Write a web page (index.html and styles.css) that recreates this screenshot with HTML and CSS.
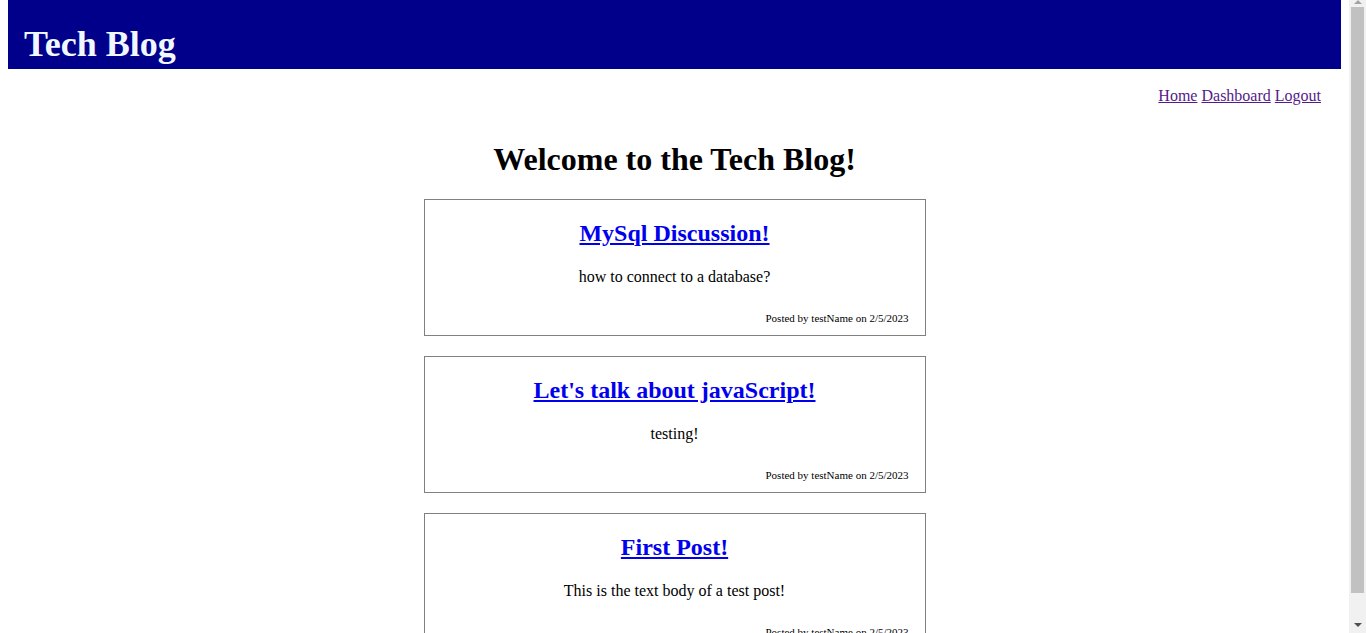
FILE: index.html
```html
<!DOCTYPE html>
<html lang="en">
<head>
<meta charset="utf-8">
<title>Tech Blog</title>
<link rel="stylesheet" href="styles.css">
</head>
<body>
<header class="site-header">
  <h1 class="site-title">Tech Blog</h1>
</header>
<nav class="site-nav">
  <a href="#home" class="nav-link">Home</a>
  <a href="#dashboard" class="nav-link">Dashboard</a>
  <a href="#logout" class="nav-link">Logout</a>
</nav>
<main class="content">
  <h1 class="page-title">Welcome to the Tech Blog!</h1>
  <section class="post">
    <h2 class="post-title"><a href="#post1">MySql Discussion!</a></h2>
    <p class="post-body">how to connect to a database?</p>
    <p class="post-meta">Posted by testName on 2/5/2023</p>
  </section>
  <section class="post">
    <h2 class="post-title"><a href="#post2">Let's talk about javaScript!</a></h2>
    <p class="post-body">testing!</p>
    <p class="post-meta">Posted by testName on 2/5/2023</p>
  </section>
  <section class="post">
    <h2 class="post-title"><a href="#post3">First Post!</a></h2>
    <p class="post-body">This is the text body of a test post!</p>
    <p class="post-meta">Posted by testName on 2/5/2023</p>
  </section>
</main>
<div class="scrollbar" aria-hidden="true">
  <span class="scroll-arrow scroll-up"></span>
  <span class="scroll-thumb"></span>
  <span class="scroll-arrow scroll-down"></span>
</div>
</body>
</html>
```

FILE: styles.css
```css
body {
  margin: 0 25px 8px 8px;
  font-family: "Liberation Serif", "Times New Roman", serif;
  font-size: 16px;
  color: #000;
  background: #fff;
}
.site-header {
  background: #00008b;
  height: 69px;
  padding: 24px 16px 0;
  box-sizing: border-box;
}
.site-title {
  margin: 0;
  font-size: 36px;
  font-weight: bold;
  color: #f0f8ff;
  line-height: 40px;
}
.site-nav {
  display: flex;
  justify-content: flex-end;
  gap: 4px;
  margin-top: 18px;
  padding-right: 20px;
}
.nav-link {
  color: #551a8b;
}
.content {
  display: flex;
  flex-direction: column;
  align-items: center;
}
.page-title {
  margin: 36px 0 21px;
  font-size: 32px;
  line-height: 37px;
  text-align: center;
}
.post {
  width: 500px;
  border: 1px solid #808080;
  text-align: center;
  margin-bottom: 20px;
}
.post-title {
  margin: 19px 0 21px;
  font-size: 24px;
  line-height: 28px;
}
.post-title a {
  color: #0000ee;
}
.post-body {
  margin: 0;
  line-height: 18px;
}
.post-meta {
  margin: 26px 0 0;
  padding: 0 16px 10px;
  font-size: 11px;
  line-height: 13px;
  text-align: right;
}
.scrollbar {
  position: fixed;
  top: 0;
  right: 0;
  width: 17px;
  height: 100vh;
  background: #f1f1f1;
  display: flex;
  flex-direction: column;
  align-items: center;
  justify-content: space-between;
}
.scroll-arrow {
  width: 0;
  height: 0;
  border-left: 4px solid transparent;
  border-right: 4px solid transparent;
}
.scroll-up {
  border-bottom: 4px solid #a3a3a3;
}
.scroll-down {
  border-top: 4px solid #505050;
  margin-bottom: 6px;
}
.scroll-thumb {
  flex: 1;
  width: 13px;
  margin: 3px 0 30px;
  background: #c1c1c1;
}
```
